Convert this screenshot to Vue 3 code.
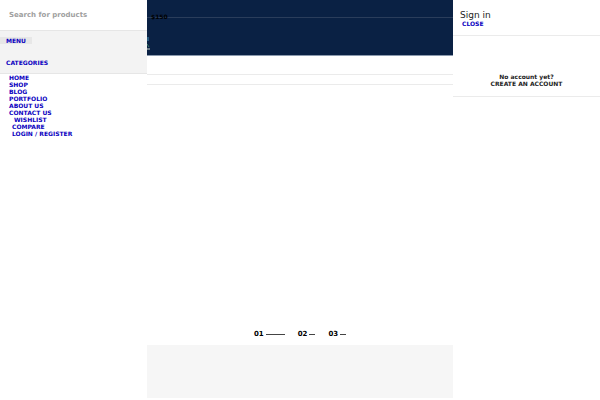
<template>
  <div class="page">
    <aside class="mobile-nav">
      <form class="search-form" @submit.prevent>
        <input
          type="text"
          v-model="keyword"
          placeholder="Search for products"
          aria-label="Search for products"
        >
      </form>
      <div class="nav-tabs">
        <a href="#" class="tab active">MENU</a>
        <a href="#" class="tab">CATEGORIES</a>
      </div>
      <ul class="nav-list">
        <li v-for="item in menuItems" :key="item.label" :class="item.type">
          <a href="#">{{ item.label }}</a>
        </li>
      </ul>
    </aside>

    <main class="content">
      <header class="header">
        <span class="cart-total">$150</span>
        <svg class="mark" width="3" height="14" viewBox="0 0 3 14" aria-hidden="true">
          <path d="M1 0v4" stroke="#3e8fb5" />
          <path d="M0 7l2 3" stroke="#3b7d68" />
          <path d="M0 12h3" stroke="#c8d2c4" />
        </svg>
      </header>
      <div class="sub-bar"></div>
      <div class="sub-bar small"></div>
      <section class="slider">
        <div class="pagination">
          <button
            v-for="n in 3"
            :key="n"
            type="button"
            :class="{ active: n === current }"
            @click="current = n"
          >
            0{{ n }}<span class="line"></span>
          </button>
        </div>
      </section>
      <section class="banner"></section>
    </main>

    <aside class="login-side">
      <div class="login-head">
        <h3>Sign in</h3>
        <a href="#" class="close">CLOSE</a>
      </div>
      <div class="create-account">
        <p>No account yet?</p>
        <a href="#">CREATE AN ACCOUNT</a>
      </div>
    </aside>
  </div>
</template>

<script setup>
import { ref } from 'vue';

const keyword = ref('');
const current = ref(1);

const menuItems = [
  { label: 'HOME' },
  { label: 'SHOP' },
  { label: 'BLOG' },
  { label: 'PORTFOLIO' },
  { label: 'ABOUT US' },
  { label: 'CONTACT US' },
  { label: 'WISHLIST', type: 'wishlist' },
  { label: 'COMPARE', type: 'with-icon' },
  { label: 'LOGIN / REGISTER', type: 'with-icon' }
];
</script>

<style>
body {
  margin: 0;
  background: #fff;
}
</style>

<style scoped>
.page {
  display: grid;
  grid-template-columns: 147px 1fr 147px;
  font-family: "DejaVu Sans", sans-serif;
  font-size: 6px;
  line-height: 7px;
  color: #222;
}

a {
  color: #0a00c0;
  font-weight: bold;
  text-decoration: none;
}

.search-form {
  border-bottom: 1px solid #e6e6e6;
}

.search-form input {
  display: block;
  box-sizing: border-box;
  width: 100%;
  height: 30px;
  padding: 0 9px 1px;
  border: none;
  outline: none;
  background: transparent;
  font-family: inherit;
  font-size: 7px;
}

.search-form input::placeholder {
  color: #a0a0a0;
  font-weight: bold;
  opacity: 1;
}

.nav-tabs {
  display: flex;
  flex-direction: column;
  align-items: flex-start;
  gap: 15px;
  padding: 6px 0 7px;
  background: #f3f3f3;
  border-bottom: 1px solid #e6e6e6;
}

.tab {
  padding: 0 6px;
}

.tab.active {
  background: #e7e7e7;
}

.nav-list {
  list-style: none;
  margin: 0;
  padding: 0 9px;
}

.nav-list .wishlist {
  padding-left: 5px;
}

.nav-list .with-icon {
  padding-left: 3px;
}

.header {
  position: relative;
  height: 55px;
  background: #0a2144;
  border-bottom: 1px solid #8b9aae;
}

.cart-total {
  display: block;
  height: 18px;
  padding: 13px 4px 0;
  box-sizing: border-box;
  border-bottom: 1px solid #2a3d5b;
  color: #000;
  font-weight: bold;
}

.mark {
  position: absolute;
  left: 0;
  top: 37px;
}

.sub-bar {
  height: 18px;
  border-bottom: 1px solid #ebebeb;
}

.sub-bar.small {
  height: 9px;
}

.slider {
  display: flex;
  align-items: flex-end;
  justify-content: center;
  min-height: 260px;
}

.pagination {
  display: flex;
  gap: 13px;
  padding-bottom: 7px;
}

.pagination button {
  display: flex;
  align-items: center;
  gap: 2px;
  padding: 0;
  border: none;
  background: none;
  color: #000;
  font-family: inherit;
  font-size: 7px;
  font-weight: bold;
  line-height: 8px;
  cursor: pointer;
}

.line {
  width: 6px;
  height: 1px;
  background: #444;
}

.active .line {
  width: 19px;
}

.banner {
  height: 53px;
  background: #f6f6f6;
}

.login-head {
  padding: 10px 7px 8px;
  border-bottom: 1px solid #ebebeb;
}

.login-head h3 {
  margin: 0;
  font-size: 9px;
  font-weight: normal;
  line-height: 10px;
}

.close {
  margin-left: 2px;
}

.create-account {
  padding: 37px 0 9px;
  border-bottom: 1px solid #ebebeb;
  text-align: center;
  font-weight: bold;
}

.create-account p {
  margin: 0;
}

.create-account a {
  color: #222;
}
</style>
